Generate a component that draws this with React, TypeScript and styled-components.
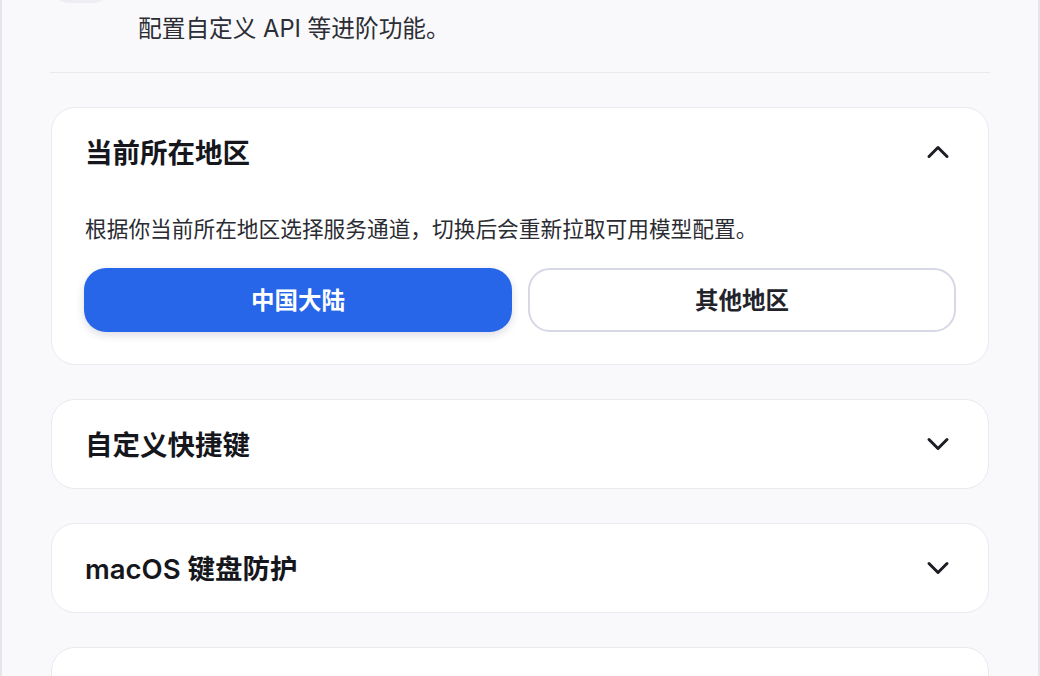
import React, { useState } from "react";
import styled, { createGlobalStyle } from "styled-components";
import { ChevronDown, ChevronUp } from "lucide-react";

const Global = createGlobalStyle`
  html, body { margin: 0; padding: 0; background: #f9f9fb; }
  body {
    font-family: "Inter", "Noto Sans CJK SC", sans-serif;
    -webkit-font-smoothing: antialiased;
  }
`;

const Page = styled.div`
  height: 100vh;
  box-sizing: border-box;
  overflow: hidden;
  background: #f9f9fb;
  border-left: 2px solid #e4e6ee;
  border-right: 2px solid #e4e6ee;
`;

const Intro = styled.div`
  display: flex;
  align-items: flex-start;
  gap: 28px;
  margin: 0 48px;
  padding-bottom: 27px;
  border-bottom: 1.5px solid #e8e9ef;
`;

const IconBox = styled.div`
  width: 58px;
  height: 58px;
  margin-top: -55px;
  margin-left: 2px;
  flex-shrink: 0;
  border-radius: 16px;
  background: #eceef3;
`;

const IntroText = styled.p`
  margin: 0;
  padding-top: 12px;
  font-size: 23.7px;
  line-height: 33px;
  color: #2c2d35;
`;

const List = styled.div`
  display: flex;
  flex-direction: column;
  gap: 34px;
  padding: 34px 49px;
`;

const Card = styled.section`
  background: #ffffff;
  border: 1px solid #e9eaf0;
  border-radius: 24px;
`;

const Header = styled.div`
  height: 88px;
  box-sizing: border-box;
  display: flex;
  align-items: center;
  justify-content: space-between;
  padding: 0 32px 0 33px;
  cursor: pointer;
`;

const Title = styled.h3`
  margin: 0 0 3px;
  font-size: 27.5px;
  font-weight: 600;
  color: #16171d;
`;

const Chevron = styled.span`
  display: flex;
  color: #1d1e25;
`;

const Body = styled.div`
  padding: 17px 32px 32px 33px;
`;

const Desc = styled.p`
  margin: 0;
  font-size: 21.7px;
  line-height: 32px;
  color: #2b2c33;
`;

const Options = styled.div`
  display: grid;
  grid-template-columns: 1fr 1fr;
  gap: 16px;
  margin-top: 23px;
  margin-left: -1px;
`;

const Option = styled.button<{ $active?: boolean }>`
  height: 64px;
  padding: 0 0 3px;
  border-radius: 22px;
  font-family: inherit;
  font-size: 23.5px;
  font-weight: 600;
  cursor: pointer;
  box-sizing: border-box;
  background: ${(p) => (p.$active ? "#2766e9" : "#ffffff")};
  color: ${(p) => (p.$active ? "#ffffff" : "#23242b")};
  border: ${(p) => (p.$active ? "none" : "2px solid #d6d8e4")};
  box-shadow: ${(p) => (p.$active ? "0 3px 8px rgba(30, 40, 80, 0.16)" : "none")};
`;

const Spacer = styled.div`
  height: 88px;
`;

export default function App() {
  const [region, setRegion] = useState("cn");
  return (
    <Page>
      <Global />
      <Intro>
        <IconBox />
        <IntroText>配置自定义 API 等进阶功能。</IntroText>
      </Intro>
      <List>
        <Card>
          <Header>
            <Title>当前所在地区</Title>
            <Chevron>
              <ChevronUp size={36} strokeWidth={2} />
            </Chevron>
          </Header>
          <Body>
            <Desc>根据你当前所在地区选择服务通道，切换后会重新拉取可用模型配置。</Desc>
            <Options>
              <Option $active={region === "cn"} onClick={() => setRegion("cn")}>
                中国大陆
              </Option>
              <Option $active={region === "other"} onClick={() => setRegion("other")}>
                其他地区
              </Option>
            </Options>
          </Body>
        </Card>
        <Card>
          <Header>
            <Title>自定义快捷键</Title>
            <Chevron>
              <ChevronDown size={36} strokeWidth={2} />
            </Chevron>
          </Header>
        </Card>
        <Card>
          <Header>
            <Title>macOS 键盘防护</Title>
            <Chevron>
              <ChevronDown size={36} strokeWidth={2} />
            </Chevron>
          </Header>
        </Card>
        <Card>
          <Spacer />
        </Card>
      </List>
    </Page>
  );
}
